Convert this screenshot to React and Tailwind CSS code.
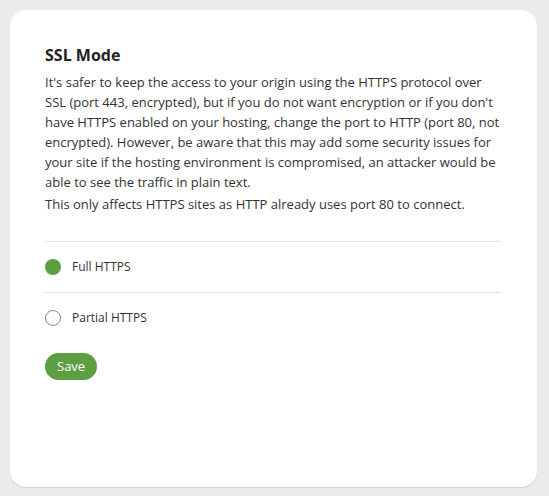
import React, { useState } from 'react';

const options = [
  { id: 'full', label: 'Full HTTPS' },
  { id: 'partial', label: 'Partial HTTPS' },
];

export default function App() {
  const [mode, setMode] = useState('full');

  return (
    <div className="min-h-screen bg-[#ebebeb] p-[10px] pr-[12px] pb-[9px] font-['Open_Sans',sans-serif] text-[#333]">
      <div className="h-[477px] bg-white rounded-[16px] shadow-[0_1px_1px_rgba(0,0,0,0.12)] pl-[35px] pr-[36px] pt-[34px]">
        <h2 className="text-[16px] leading-[22px] font-bold text-[#222]">SSL Mode</h2>
        <p className="mt-[6px] text-[13px] leading-[20px]">
          It's safer to keep the access to your origin using the HTTPS protocol over SSL (port 443, encrypted), but if you do not want encryption or if you don't have HTTPS enabled on your hosting, change the port to HTTP (port 80, not encrypted). However, be aware that this may add some security issues for your site if the hosting environment is compromised, an attacker would be able to see the traffic in plain text.
        </p>
        <p className="mt-[2px] text-[13px] leading-[20px]">
          This only affects HTTPS sites as HTTP already uses port 80 to connect.
        </p>

        <div className="mt-[27px]">
          {options.map((o) => (
            <label
              key={o.id}
              className="flex items-center gap-[11px] h-[51px] border-t border-[#e3e3e3] cursor-pointer"
            >
              <input
                type="radio"
                name="ssl"
                className="hidden"
                checked={mode === o.id}
                onChange={() => setMode(o.id)}
              />
              {mode === o.id ? (
                <span className="w-[16px] h-[16px] rounded-full bg-[#5d9e43]" />
              ) : (
                <span className="w-[16px] h-[16px] rounded-full border border-[#8a8a8a] bg-white" />
              )}
              <span className="text-[12px]">{o.label}</span>
            </label>
          ))}
        </div>

        <button className="mt-[10px] h-[27px] px-[12px] rounded-full bg-[#5d9e43] text-white text-[13px]">
          Save
        </button>
      </div>
    </div>
  );
}
